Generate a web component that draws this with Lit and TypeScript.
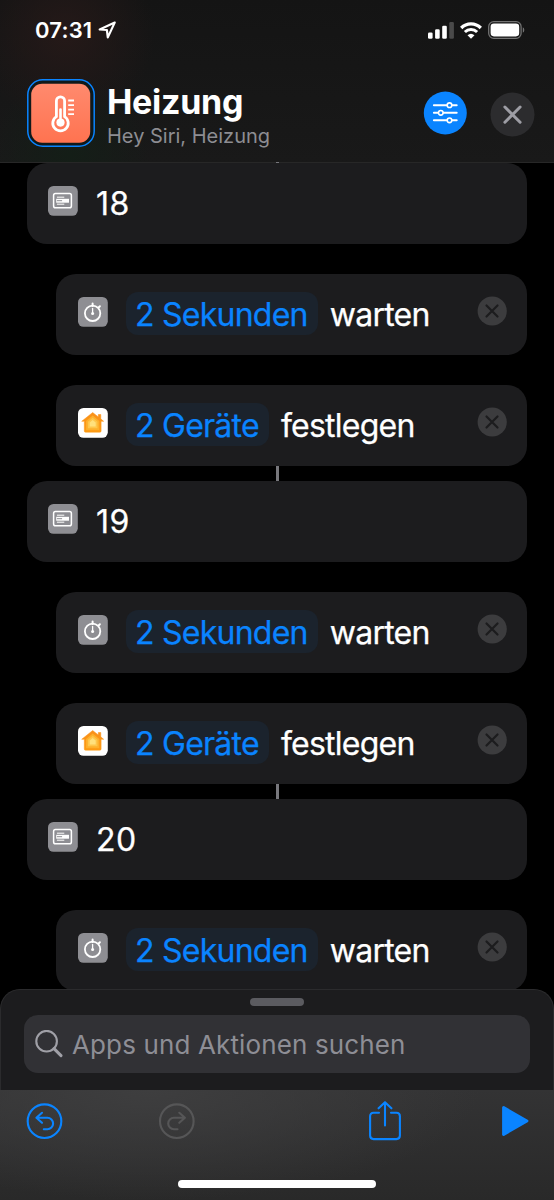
import { LitElement, html, css, svg } from "lit";
import { customElement, property } from "lit/decorators.js";

type Kind = "comment" | "wait" | "home";

@customElement("action-icon")
class ActionIcon extends LitElement {
  @property() kind: Kind = "comment";

  static styles = css`
    :host { display: block; width: 30px; height: 30px; flex: none; }
    svg { display: block; }
  `;

  glyph() {
    if (this.kind === "wait") {
      return svg`
        <rect width="29.8" height="29.8" rx="5.5" fill="#8e8e93"/>
        <circle cx="14.6" cy="16.3" r="7.7" fill="none" stroke="#fff" stroke-width="1.8"/>
        <path d="M14.6 6.6v2.4M20.6 10.4l1.3-1.2" stroke="#fff" stroke-width="2" stroke-linecap="round"/>
        <path d="M14.6 11.4v5.1" stroke="#fff" stroke-width="1.3" stroke-linecap="round"/>
        <circle cx="14.6" cy="16.5" r="1.5" fill="#fff"/>`;
    }
    if (this.kind === "home") {
      return svg`
        <defs>
          <linearGradient id="g" x1="0" y1="0" x2="0" y2="1">
            <stop offset="0" stop-color="#f9901a"/><stop offset="1" stop-color="#fd9a12"/>
          </linearGradient>
        </defs>
        <rect width="29.8" height="29.8" rx="5.5" fill="#fff"/>
        <path d="M14.7 4.5l11 8.8h-2.6v9.7q0 1.2-1.2 1.2H7.5q-1.2 0-1.2-1.2v-9.7H3.7zM20.3 6.5h2.5v6l-2.5-2z" fill="url(#g)" stroke="url(#g)" stroke-width=".5" stroke-linejoin="round"/>
        <path d="M14.7 7.6l6.6 5.3v9.3H8.1v-9.3z" fill="#fdb02c"/>
        <path d="M14.7 9.8l4.8 3.9v6.5H9.9v-6.5z" fill="#fec64b"/>
        <path d="M14.7 12l3 2.5v3.9h-6v-3.9z" fill="#ffe07c"/>`;
    }
    return svg`
      <rect width="29.8" height="29.8" rx="5.5" fill="#8e8e93"/>
      <rect x="5.6" y="7.6" width="17.8" height="14.2" rx="1.8" fill="none" stroke="#fff" stroke-width="1.5"/>
      <path d="M9.3 11.2h6.6M9.3 18.2h6.6" stroke="#fff" stroke-width="1" stroke-linecap="round"/>
      <path d="M8.2 12.8h12.8v3.9H8.2z" fill="#fff"/>
      <path d="M9.3 14.7h4.4" stroke="#8e8e93" stroke-width="1" stroke-linecap="round"/>`;
  }

  render() {
    return html`<svg width="30" height="30" viewBox="0 0 30 30">${this.glyph()}</svg>`;
  }
}

@customElement("action-card")
class ActionCard extends LitElement {
  @property() kind: Kind = "comment";
  @property() token = "";
  @property() label = "";

  static styles = css`
    :host { display: block; flex: none; }
    .card {
      box-sizing: border-box; height: 81px; border-radius: 20px; background: #1c1c1e;
      display: flex; align-items: flex-start; padding: 18px 20px 0 22px;
      font-size: 32px; font-weight: 400; color: #fff; white-space: nowrap; letter-spacing: -0.75px;
      -webkit-text-stroke: 0.25px currentColor;
    }
    .card.comment { padding-left: 21px; }
    .icon { margin-top: 4.5px; }
    .token {
      height: 43px; line-height: 46px; border-radius: 12px; background: #1b232d; color: #0a84ff;
      margin-left: 18px; padding: 0 10.5px 0 9px;
    }
    .label { line-height: 46px; margin-left: 11.5px; }
    .comment .label { margin-left: 18px; letter-spacing: 0.4px; }
    .remove { margin: 4px 0 0 auto; }
  `;

  render() {
    const comment = this.kind === "comment";
    return html`<div class="card ${this.kind}">
      <action-icon class="icon" .kind=${this.kind}></action-icon>
      ${comment ? "" : html`<span class="token">${this.token}</span>`}
      <span class="label">${this.label}</span>
      ${comment ? "" : html`<svg class="remove" width="30" height="30" viewBox="0 0 30 30">
        <circle cx="15.2" cy="15" r="14.6" fill="#3c3c3e"/>
        <path d="M9.5 9.5l11 11M20.5 9.5l-11 11" stroke="#1c1c1e" stroke-width="2.2" stroke-linecap="round"/>
      </svg>`}
    </div>`;
  }
}

@customElement("app-root")
class AppRoot extends LitElement {
  static styles = css`
    :host {
      display: flex; flex-direction: column; width: 554px; height: 1200px; overflow: hidden;
      background: #000; font-family: Inter, "Liberation Sans", sans-serif; color: #fff;
    }
    svg { display: block; flex: none; }
    .header {
      box-sizing: border-box; height: 163px; flex: none; display: flex; flex-direction: column;
      background:
        linear-gradient(#272727, #272727) bottom / 100% 1px no-repeat,
        radial-gradient(circle at 65px 35px, #251918 0, #25191800 90px),
        radial-gradient(circle at 70px 155px, #141e17 0, #141e1700 80px),
        linear-gradient(#141414, #191919);
    }
    .tick { width: 3px; height: 1px; background: #77777c; margin: auto auto 0; }
    .status { display: flex; align-items: center; height: 60px; padding: 0 29px 0 35px; }
    .time { font-size: 22px; font-weight: 600; line-height: 28px; letter-spacing: 0.2px; }
    .arrow { margin-left: 6px; }
    .signal { margin-left: auto; }
    .wifi { margin-left: 6px; }
    .battery { margin-left: 6px; }
    .title { display: flex; align-items: flex-start; padding: 19px 19px 0 27px; }
    .names { margin: 3px 0 0 12px; white-space: nowrap; }
    .name { font-size: 34px; line-height: 40px; font-weight: 700; letter-spacing: -0.3px; }
    .phrase { font-size: 20px; line-height: 26px; color: #8d8d92; margin-top: 1px; }
    .settings { margin: 12px 23px 0 auto; }
    .close { margin-top: 13px; }
    .list { flex: 1; min-height: 0; overflow: hidden; display: flex; flex-direction: column; padding: 0 27px; }
    .nested { margin: 30px 0 0 29px; }
    .link { width: 3px; height: 15px; flex: none; background: #77777c; margin: 0 auto; }
    .drawer {
      box-sizing: border-box; height: 101px; flex: none; background: #1c1c1e; border: 1px solid #2b2b2d;
      border-bottom: 0; border-radius: 20px 20px 0 0; padding: 8px 23px 0;
    }
    .under { flex: none; display: flex; flex-direction: column; background: #000; }
    .grip { width: 54px; height: 8px; border-radius: 4px; background: #5b5b60; margin: 0 auto 9px; }
    .search {
      height: 58px; border-radius: 14px; background: #313135; display: flex; align-items: center;
      padding-left: 11px; font-size: 26px; color: #8e8e95; white-space: nowrap; letter-spacing: 0.13px;
    }
    .hint { margin-left: 9px; }
    .toolbar {
      height: 110px; flex: none; display: flex; flex-direction: column; justify-content: space-between;
      background: radial-gradient(ellipse 330px 110px at 150px 0, #3e3e3f, #3e3e3f00), linear-gradient(#333334, #292929);
    }
    .tools { display: flex; align-items: center; height: 62px; padding: 0 25px 0 26px; }
    .redo { margin-left: 95px; }
    .share { margin-left: 174px; }
    .play { margin-left: auto; }
    .bar { width: 198px; height: 8px; border-radius: 4px; background: #fff; margin: 0 auto 12px; }
  `;

  group(n: string, last = false) {
    return html`
      <action-card kind="comment" label=${n}></action-card>
      <action-card class="nested" kind="wait" token="2 Sekunden" label="warten"></action-card>
      ${last ? "" : html`
        <action-card class="nested" kind="home" token="2 Geräte" label="festlegen"></action-card>
        <div class="link"></div>`}
    `;
  }

  render() {
    return html`
      <div class="header">
        <div class="status">
          <span class="time">07:31</span>
          <svg class="arrow" width="19" height="18" viewBox="0 0 19 18">
            <path d="M16.7 1.6L1.7 8.5l7.2.5.9 7.4z" fill="none" stroke="#fff" stroke-width="2.2" stroke-linejoin="round"/>
          </svg>
          <svg class="signal" width="26" height="17" viewBox="0 0 26 17">
            <rect x="0" y="10.5" width="4.6" height="6.2" rx="1.3" fill="#fff"/>
            <rect x="7.1" y="7.3" width="4.6" height="9.4" rx="1.3" fill="#fff"/>
            <rect x="14.2" y="3.8" width="4.6" height="12.9" rx="1.3" fill="#fff"/>
            <rect x="21.3" y="0" width="4.6" height="16.7" rx="1.3" fill="#4a4a4a"/>
          </svg>
          <svg class="wifi" width="22" height="17" viewBox="0 0 22 17">
            <path d="M1.2 6A13.9 13.9 0 0 1 20.8 6" fill="none" stroke="#fff" stroke-width="3.3"/>
            <path d="M4.9 10A8.6 8.6 0 0 1 17.1 10" fill="none" stroke="#fff" stroke-width="3"/>
            <path d="M11 16.8L7.5 13.2Q11 10.2 14.5 13.2z" fill="#fff"/>
          </svg>
          <svg class="battery" width="37" height="18" viewBox="0 0 37 18">
            <rect x=".7" y=".7" width="32.4" height="16.6" rx="5" fill="none" stroke="#737373" stroke-width="1.3"/>
            <rect x="2.6" y="2.6" width="28.6" height="12.8" rx="3.3" fill="#fff"/>
            <path d="M34.8 6.2q1.5.8 1.5 2.8t-1.5 2.8z" fill="#737373"/>
          </svg>
        </div>
        <div class="title">
          <svg width="68" height="68" viewBox="0 0 68 68">
            <defs><linearGradient id="c" x1="0" y1="0" x2="0" y2="1">
              <stop offset="0" stop-color="#ff8a6e"/><stop offset="1" stop-color="#ff7350"/>
            </linearGradient></defs>
            <rect x=".8" y=".8" width="66.4" height="66.4" rx="15" fill="#10191a" stroke="#0a84ff" stroke-width="1.5"/>
            <rect x="4.2" y="4.7" width="59" height="59" rx="11" fill="url(#c)"/>
            <path d="M29.4 37.6V22a4.1 4.1 0 0 1 8.2 0v15.6a7.7 7.7 0 1 1-8.2 0z" fill="none" stroke="#fff" stroke-width="2.8"/>
            <path d="M33.5 30.5v13" stroke="#fff" stroke-width="2.6" stroke-linecap="round"/>
            <circle cx="33.5" cy="43.6" r="4.1" fill="#fff"/>
            <path d="M41.2 21.5h5.8M41.2 26.1h5.8M41.2 30.7h5.8M41.2 35.2h5.8" stroke="#fff" stroke-width="1.8"/>
          </svg>
          <div class="names">
            <div class="name">Heizung</div>
            <div class="phrase">Hey Siri, Heizung</div>
          </div>
          <svg class="settings" width="44" height="44" viewBox="0 0 44 44">
            <circle cx="22.3" cy="22" r="21.5" fill="#0a84ff"/>
            <g fill="#0a84ff" stroke="#fff" stroke-width="2" stroke-linecap="round">
              <path d="M10.9 14.2h22.8M10.9 21.8h22.8M10.9 29.3h22.8"/>
              <circle cx="26.5" cy="14.2" r="2.3" stroke-width="1.6"/>
              <circle cx="17.8" cy="21.8" r="2.3" stroke-width="1.6"/>
              <circle cx="26.5" cy="29.3" r="2.3" stroke-width="1.6"/>
            </g>
          </svg>
          <svg class="close" width="45" height="45" viewBox="0 0 45 45">
            <circle cx="22.5" cy="22.5" r="22" fill="#2c2c2e"/>
            <path d="M14.9 15l15.2 15.2M30.1 15L14.9 30.2" stroke="#9d9da4" stroke-width="3" stroke-linecap="round"/>
          </svg>
        </div>
        <div class="tick"></div>
      </div>
      <div class="list">${this.group("18")}${this.group("19")}${this.group("20", true)}</div>
      <div class="under">
        <div class="drawer">
          <div class="grip"></div>
          <div class="search">
            <svg width="28" height="28" viewBox="0 0 28 28">
              <circle cx="11.6" cy="11.2" r="10.3" fill="none" stroke="#a0a0a7" stroke-width="2.1"/>
              <path d="M19 18.6l7 7" stroke="#a0a0a7" stroke-width="3" stroke-linecap="round"/>
            </svg>
            <span class="hint">Apps und Aktionen suchen</span>
          </div>
        </div>
        <div class="toolbar">
          <div class="tools">
            <svg width="37" height="37" viewBox="0 0 37 37" fill="none" stroke="#0a84ff" stroke-width="2.1" stroke-linecap="round" stroke-linejoin="round">
              <circle cx="18.5" cy="18.2" r="16.8"/>
              <path d="M16 9.8l-5.6 5 5.6 5M10.8 14.8h10.6a5.7 5.7 0 0 1 0 11.4h-3.6"/>
            </svg>
            <svg class="redo" width="37" height="37" viewBox="0 0 37 37" fill="none" stroke="#565657" stroke-width="2.1" stroke-linecap="round" stroke-linejoin="round">
              <circle cx="18.8" cy="18.2" r="16.8"/>
              <path d="M21.3 9.8l5.6 5-5.6 5M26.5 14.8H15.9a5.7 5.7 0 0 0 0 11.4h3.6"/>
            </svg>
            <svg class="share" width="32" height="40" viewBox="0 0 32 40" fill="none" stroke="#0a84ff" stroke-width="2.1" stroke-linecap="round" stroke-linejoin="round">
              <path d="M10 11.8H4.6Q1.1 11.8 1.1 15.3v19.3q0 3.5 3.5 3.5h22.8q3.5 0 3.5-3.5V15.3q0-3.5-3.5-3.5H22"/>
              <path d="M16 24.5V1.2M9.6 7.3L16 1.2l6.4 6.1"/>
            </svg>
            <svg class="play" width="28" height="32" viewBox="0 0 28 32">
              <path d="M2.6 2.6L25.9 16 2.6 29.4z" fill="#0a84ff" stroke="#0a84ff" stroke-width="3" stroke-linejoin="round"/>
            </svg>
          </div>
          <div class="bar"></div>
        </div>
      </div>
    `;
  }
}
